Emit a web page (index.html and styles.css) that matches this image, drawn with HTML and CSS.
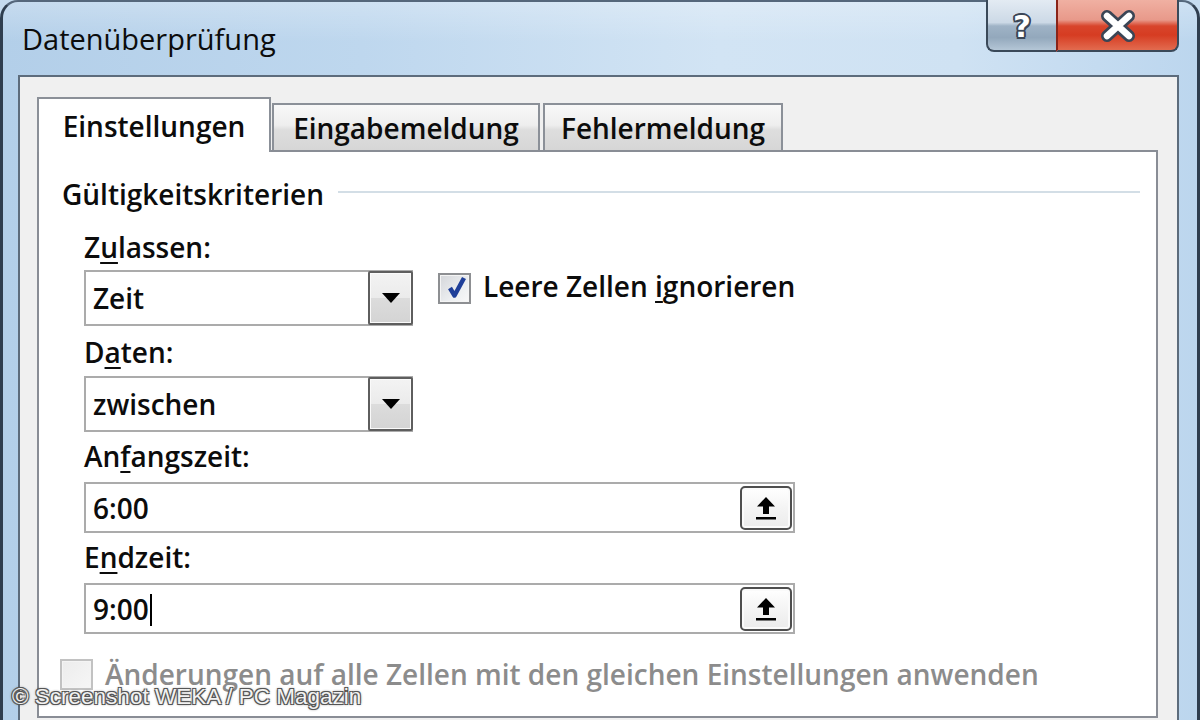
FILE: index.html
```html
<!DOCTYPE html>
<html lang="de">
<head>
<meta charset="utf-8">
<title>Datenüberprüfung</title>
<link rel="stylesheet" href="styles.css">
</head>
<body>
<div class="window">
  <div class="titlebar">
    <div class="title">Datenüberprüfung</div>
    <div class="caption">
      <div class="btn-help"><span class="help-glyph">?</span></div>
      <div class="btn-close">
        <svg width="40" height="32" viewBox="0 0 40 32">
          <path d="M9 6 L31 26 M31 6 L9 26" stroke="#3a4555" stroke-width="12" stroke-linecap="round" fill="none"/>
          <path d="M9 6 L31 26 M31 6 L9 26" stroke="#ffffff" stroke-width="6.5" stroke-linecap="round" fill="none"/>
        </svg>
      </div>
    </div>
  </div>
  <div class="client">
    <div class="tabs">
      <div class="tab active">Einstellungen</div>
      <div class="tab inactive t2">Eingabemeldung</div>
      <div class="tab inactive t3">Fehlermeldung</div>
    </div>
    <div class="panel">
      <div class="group-head"><span>Gültigkeitskriterien</span><div class="group-line"></div></div>
      <div class="fields">
        <div class="lbl l1">Z<u>u</u>lassen:</div>
        <div class="row1">
          <div class="combo">
            <span class="combo-text">Zeit</span>
            <div class="drop"><svg width="18" height="10" viewBox="0 0 18 10"><path d="M0 0 H18 L9 10 Z" fill="#000"/></svg></div>
          </div>
          <div class="chk">
            <div class="cb">
              <svg width="28" height="27" viewBox="0 0 28 27"><path d="M9 13 L13.5 20.5 L23 3" stroke="#1f3f99" stroke-width="4.5" fill="none" stroke-linejoin="round"/></svg>
            </div>
            <span>Leere Zellen <u>i</u>gnorieren</span>
          </div>
        </div>
        <div class="lbl l2">D<u>a</u>ten:</div>
        <div class="combo c2">
          <span class="combo-text">zwischen</span>
          <div class="drop"><svg width="18" height="10" viewBox="0 0 18 10"><path d="M0 0 H18 L9 10 Z" fill="#000"/></svg></div>
        </div>
        <div class="lbl l3">An<u>f</u>angszeit:</div>
        <div class="input">
          <span class="combo-text">6:00</span>
          <div class="spin"><svg width="48" height="40" viewBox="0 0 48 40"><path d="M24 9 L33 18.5 H27 V26 H21 V18.5 H15 Z" fill="#000"/><rect x="14" y="29" width="20" height="2.5" fill="#000"/></svg></div>
        </div>
        <div class="lbl l4">E<u>n</u>dzeit:</div>
        <div class="input">
          <span class="combo-text">9:00<span class="caret"></span></span>
          <div class="spin"><svg width="48" height="40" viewBox="0 0 48 40"><path d="M24 9 L33 18.5 H27 V26 H21 V18.5 H15 Z" fill="#000"/><rect x="14" y="29" width="20" height="2.5" fill="#000"/></svg></div>
        </div>
      </div>
      <div class="apply">
        <div class="cb disabled"></div>
        <span>Änderungen auf alle Zellen mit den gleichen Einstellungen anwenden</span>
      </div>
    </div>
  </div>
</div>
<div class="watermark">© Screenshot WEKA / PC Magazin</div>
</body>
</html>
```

FILE: styles.css
```css
* { box-sizing: border-box; }
html, body { margin: 0; padding: 0; }
body {
  width: 1200px;
  height: 720px;
  overflow: hidden;
  position: relative;
  background: #c5dbef;
  font-family: "Open Sans", "Noto Sans", sans-serif;
  color: #111;
}
.window {
  height: 720px;
  display: flex;
  flex-direction: column;
  border-left: 3px solid #2f3e4f;
  border-right: 3px solid #2f3e4f;
  border-top: 2px solid #55677b;
  border-radius: 18px 18px 0 0;
  background:
    linear-gradient(to bottom, rgba(255,255,255,0.25), rgba(255,255,255,0) 40px),
    linear-gradient(to right, #b3cfe9 0%, #bed7ee 30%, #d2e4f4 60%, #cfe2f3 80%, #bcd6ee 100%);
}
.titlebar {
  flex: none;
  height: 73px;
  display: flex;
  align-items: flex-start;
}
.title {
  margin: 17px 0 0 19px;
  font-size: 29px;
  line-height: 40px;
  color: #0c0c0c;
}
.caption {
  margin-left: auto;
  margin-right: 18px;
  margin-top: -2px;
  display: flex;
}
.btn-help {
  width: 70px;
  height: 52px;
  border: 2px solid #3a4959;
  border-top: none;
  border-right: none;
  border-radius: 0 0 0 8px;
  background: linear-gradient(to bottom, #e3ebf3 0%, #ccd9e6 45%, #9fb3c6 52%, #93a8bc 75%, #b4c6d6 100%);
  display: flex;
  align-items: center;
  justify-content: center;
}
.help-glyph {
  font-family: "DejaVu Sans", sans-serif;
  font-weight: bold;
  font-size: 31px;
  line-height: 34px;
  color: #fff;
  margin-top: 1px;
  text-shadow: -2px 0 0 #3b4656, 2px 0 0 #3b4656, 0 -2px 0 #3b4656, 0 2px 0 #3b4656,
    -1.5px -1.5px 0 #3b4656, 1.5px 1.5px 0 #3b4656, -1.5px 1.5px 0 #3b4656, 1.5px -1.5px 0 #3b4656;
}
.btn-close {
  width: 123px;
  height: 52px;
  border: 2px solid #3a4959;
  border-top: none;
  border-left: 2px solid #8a2418;
  border-radius: 0 0 8px 0;
  background: linear-gradient(to bottom, #f0b0a2 0%, #e8998a 40%, #d8452c 52%, #d63c22 70%, #e26b4f 100%);
  display: flex;
  align-items: center;
  justify-content: center;
}
.btn-close svg { display: block; margin-top: 1px; }
.client {
  flex: 1;
  margin: 0 18px 0 15px;
  border: 2px solid #5d6c7c;
  border-bottom: none;
  background: #f0f0f0;
  padding: 20px 19px 0 17px;
  display: flex;
  flex-direction: column;
}
.tabs {
  flex: none;
  height: 55px;
  display: flex;
  align-items: flex-end;
  position: relative;
  z-index: 1;
}
.tab {
  border: 2px solid #8b9098;
  border-bottom: none;
  text-align: center;
  font-size: 28px;
  font-weight: 600;
  line-height: 36px;
  white-space: nowrap;
  color: #0c0c0c;
}
.tab.active {
  width: 234px;
  height: 55px;
  background: #fff;
  padding-top: 9px;
}
.tab.inactive {
  height: 47px;
  margin-bottom: 2px;
  padding-top: 5px;
  background: linear-gradient(to bottom, #f8f8f8 0%, #eeeeee 45%, #dedede 55%, #d6d6d6 100%);
}
.tab.t2 { width: 268px; margin-left: 1px; }
.tab.t3 { width: 240px; margin-left: 3px; }
.panel {
  flex: none;
  margin-top: -2px;
  height: 568px;
  border: 2px solid #898d95;
  background: #fff;
  padding: 24px 16px 0 23px;
  font-size: 28px;
  font-weight: 600;
  line-height: 36px;
  color: #0c0c0c;
}
.group-head {
  display: flex;
  align-items: center;
  height: 36px;
}
.group-line {
  flex: 1;
  height: 2px;
  margin: -4px 0 0 14px;
  background: #d3dee6;
}
.fields { margin-left: 22px; }
.lbl { height: 36px; white-space: nowrap; }
.lbl u, .chk u { text-decoration-thickness: 2px; text-underline-offset: 4px; }
.l1 { margin-top: 17px; }
.l2 { margin-top: 8px; }
.l3 { margin-top: 6px; }
.l4 { margin-top: 6px; }
.row1 {
  margin-top: 5px;
  display: flex;
  align-items: flex-start;
  gap: 25px;
}
.combo {
  width: 329px;
  height: 56px;
  border: 2px solid #ababab;
  background: #fff;
  display: flex;
  align-items: center;
}
.c2 { margin-top: 6px; }
.combo-text { padding-left: 7px; white-space: nowrap; }
.drop {
  margin: -1px -2px -1px auto;
  width: 45px;
  height: 54px;
  border: 2px solid #5e5e5e;
  border-radius: 2px;
  box-shadow: inset 0 0 0 1px #fafafa;
  background: linear-gradient(to bottom, #f3f3f3 0%, #ebebeb 50%, #dcdcdc 51%, #d4d4d4 100%);
  display: flex;
  align-items: center;
  justify-content: center;
}
.drop svg { display: block; }
.chk {
  margin-top: -2px;
  display: flex;
  align-items: center;
  gap: 12px;
  white-space: nowrap;
}
.cb {
  width: 33px;
  height: 31px;
  margin-top: 4px;
  border: 2px solid #8d8f92;
  background: linear-gradient(135deg, #d4d6da 0%, #eceef0 60%, #f8f8f8 100%);
  box-shadow: inset 0 0 0 1px #f4f4f4;
  display: flex;
  align-items: center;
  justify-content: center;
}
.cb svg { display: block; }
.cb.disabled {
  margin-top: 0;
  border-color: #c2c2c2;
  background: linear-gradient(135deg, #ececec 0%, #f6f6f6 100%);
}
.input {
  margin-top: 8px;
  width: 711px;
  height: 51px;
  border: 2px solid #ababab;
  background: #fff;
  display: flex;
  align-items: center;
}
.caret {
  display: inline-block;
  width: 2px;
  height: 32px;
  background: #000;
  vertical-align: -6px;
  margin-left: 1px;
}
.spin {
  margin-left: auto;
  margin-right: 1px;
  width: 52px;
  height: 44px;
  border: 2px solid #4e4e4e;
  border-radius: 5px;
  background: linear-gradient(to bottom, #ffffff 0%, #f4f4f4 50%, #ebebeb 100%);
  box-shadow: inset 0 0 0 2px #fafafa;
  display: flex;
  align-items: center;
  justify-content: center;
}
.spin svg { display: block; }
.apply {
  margin: 22px 0 0 -2px;
  display: flex;
  align-items: center;
  gap: 12px;
  white-space: nowrap;
  color: #8c8c8c;
}
.watermark {
  position: absolute;
  left: 12px;
  top: 684px;
  font-family: "Liberation Sans", Arial, sans-serif;
  font-size: 22.5px;
  line-height: 26px;
  color: #f2f2f2;
  white-space: nowrap;
  text-shadow: -1px -1px 0 #555, 1px -1px 0 #555, -1px 1px 0 #555, 1px 1px 0 #555, 0 0 3px #222;
}
```
